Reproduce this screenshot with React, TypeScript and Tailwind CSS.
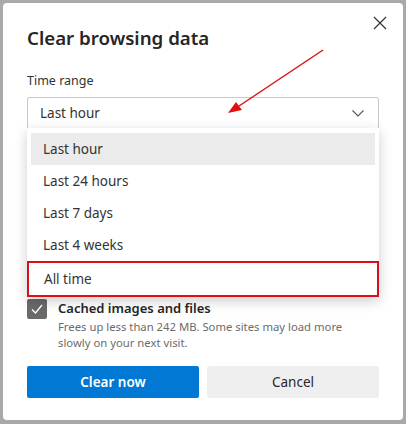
import React from "react";

const font = { fontFamily: '"Segoe UI", "Noto Sans", "Open Sans", sans-serif' };

export default function App() {
  const items = ["Last hour", "Last 24 hours", "Last 7 days", "Last 4 weeks"];
  return (
    <div className="w-[406px] h-[424px] bg-[#a9a9a9] pt-[3px] pl-[3px]" style={font}>
      <div className="relative w-[400px] h-[417px] bg-white rounded-[4px] px-[24px] pt-[21px] text-[#1b1b1b]">
        <button className="absolute right-[16px] top-[13px] w-[14px] h-[14px]">
          <svg viewBox="0 0 14 14" width="14" height="14">
            <path d="M1 1 L13 13 M13 1 L1 13" stroke="#333" strokeWidth="1.2" />
          </svg>
        </button>
        <h1 className="text-[18.7px] font-semibold leading-[28px] text-[#262626]">Clear browsing data</h1>
        <div className="mt-[20px] text-[12.5px] leading-[18px] text-[#333]">Time range</div>
        <div className="relative mt-[7px]">
          <div className="h-[32px] border border-[#c8c8c8] rounded-[2px] flex items-center justify-between pl-[12px] pr-[14px]">
            <span className="text-[13.5px] text-[#333]">Last hour</span>
            <svg viewBox="0 0 12 7" width="12" height="7">
              <path d="M0.5 0.5 L6 6 L11.5 0.5" fill="none" stroke="#555" strokeWidth="1.1" />
            </svg>
          </div>
          <div className="absolute left-0 right-0 top-[31px] bg-white shadow-[0_4px_12px_rgba(0,0,0,0.2)] pt-[5px]">
            {items.map((it, i) => (
              <div
                key={it}
                className={
                  "mx-[4px] h-[32px] flex items-center pl-[12px] text-[13.5px] text-[#333] " +
                  (i === 0 ? "bg-[#ebebeb]" : "")
                }
              >
                {it}
              </div>
            ))}
            <div className="h-[36px] border-2 border-[#d9101a] flex items-center pl-[15px] text-[13.5px] text-[#333]">
              All time
            </div>
          </div>
        </div>
        <div className="mt-[170px] flex gap-[11px]">
          <div className="w-[20px] h-[20px] bg-[#6a6a6a] rounded-[2px] flex items-center justify-center shrink-0">
            <svg viewBox="0 0 14 14" width="14" height="14">
              <path d="M2 7.5 L5.5 11 L12 3" fill="none" stroke="white" strokeWidth="1.4" />
            </svg>
          </div>
          <div>
            <div className="text-[13px] font-semibold leading-[18px] text-[#262626]">Cached images and files</div>
            <div className="text-[11.3px] leading-[16px] text-[#6b6b6b] mt-[2px] w-[300px]">
              Frees up less than 242 MB. Some sites may load more slowly on your next visit.
            </div>
          </div>
        </div>
        <div className="mt-[15px] flex gap-[8px]">
          <button className="w-[172px] h-[32px] bg-[#0078d4] text-white text-[13.5px] font-semibold rounded-[2px]">
            Clear now
          </button>
          <button className="w-[172px] h-[32px] bg-[#efefef] text-[#262626] text-[13.5px] rounded-[2px]">
            Cancel
          </button>
        </div>
        <svg className="absolute left-0 top-0 pointer-events-none" width="400" height="417" viewBox="0 0 400 417">
          <line x1="320" y1="47" x2="236" y2="103" stroke="#e01010" strokeWidth="1.5" />
          <polygon points="225,110 233,99 239,107" fill="#e01010" />
        </svg>
      </div>
    </div>
  );
}
